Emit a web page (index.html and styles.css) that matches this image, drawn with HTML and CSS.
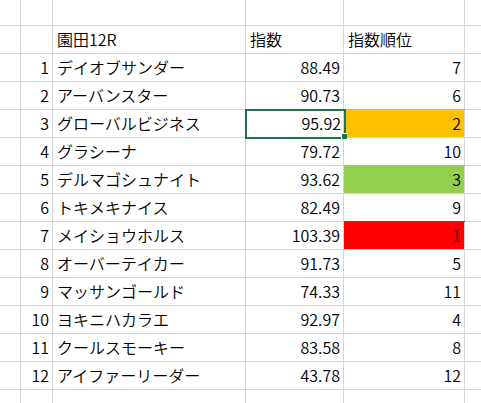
FILE: index.html
```html
<!DOCTYPE html>
<html lang="ja">
<head>
<meta charset="utf-8">
<link rel="stylesheet" href="styles.css">
</head>
<body>
<div class="sheet">
  <div class="c"></div><div class="c"></div><div class="c"></div><div class="c"></div><div class="c"></div><div class="c"></div>

  <div class="c"></div><div class="c"></div><div class="c t">園田12R</div><div class="c t">指数</div><div class="c t">指数順位</div><div class="c"></div>

  <div class="c"></div><div class="c n">1</div><div class="c t">デイオブサンダー</div><div class="c n">88.49</div><div class="c n">7</div><div class="c"></div>
  <div class="c"></div><div class="c n">2</div><div class="c t">アーバンスター</div><div class="c n">90.73</div><div class="c n">6</div><div class="c"></div>
  <div class="c"></div><div class="c n">3</div><div class="c t">グローバルビジネス</div><div class="c n sel">95.92<span class="selbox"></span><span class="handle"></span></div><div class="c n orange">2</div><div class="c"></div>
  <div class="c"></div><div class="c n">4</div><div class="c t">グラシーナ</div><div class="c n">79.72</div><div class="c n">10</div><div class="c"></div>
  <div class="c"></div><div class="c n">5</div><div class="c t">デルマゴシュナイト</div><div class="c n">93.62</div><div class="c n green">3</div><div class="c"></div>
  <div class="c"></div><div class="c n">6</div><div class="c t">トキメキナイス</div><div class="c n">82.49</div><div class="c n">9</div><div class="c"></div>
  <div class="c"></div><div class="c n">7</div><div class="c t">メイショウホルス</div><div class="c n">103.39</div><div class="c n red">1</div><div class="c"></div>
  <div class="c"></div><div class="c n">8</div><div class="c t">オーバーテイカー</div><div class="c n">91.73</div><div class="c n">5</div><div class="c"></div>
  <div class="c"></div><div class="c n">9</div><div class="c t">マッサンゴールド</div><div class="c n">74.33</div><div class="c n">11</div><div class="c"></div>
  <div class="c"></div><div class="c n">10</div><div class="c t">ヨキニハカラエ</div><div class="c n">92.97</div><div class="c n">4</div><div class="c"></div>
  <div class="c"></div><div class="c n">11</div><div class="c t">クールスモーキー</div><div class="c n">83.58</div><div class="c n">8</div><div class="c"></div>
  <div class="c"></div><div class="c n">12</div><div class="c t">アイファーリーダー</div><div class="c n">43.78</div><div class="c n">12</div><div class="c"></div>

  <div class="c"></div><div class="c"></div><div class="c"></div><div class="c"></div><div class="c"></div><div class="c"></div>
</div>
</body>
</html>
```

FILE: styles.css
```css
html, body {
  margin: 0;
  padding: 0;
  background: #ffffff;
  overflow: hidden;
}

.sheet {
  display: grid;
  grid-template-columns: 21px 32px 193px 98px 121px 40px;
  grid-template-rows: 26px repeat(14, 28px);
  font-family: "Noto Sans CJK JP", "Noto Sans", sans-serif;
  font-size: 16px;
  font-weight: 350;
  color: #000000;
}

.c {
  box-sizing: border-box;
  border-right: 1px solid #d4d4d4;
  border-bottom: 1px solid #d4d4d4;
  line-height: 27px;
  white-space: nowrap;
  overflow: visible;
}

.t {
  padding-left: 4px;
  text-align: left;
}

.n {
  padding-right: 3px;
  text-align: right;
}

.sel {
  position: relative;
  padding-right: 2px;
}

.selbox {
  position: absolute;
  left: -1px;
  top: -1px;
  width: 101px;
  height: 30px;
  box-sizing: border-box;
  border: 2px solid #217346;
}

.handle {
  position: absolute;
  left: 95px;
  top: 23px;
  width: 5px;
  height: 5px;
  background: #217346;
  border-left: 1px solid #ffffff;
  border-top: 1px solid #ffffff;
}

.orange {
  background: #ffc000;
  box-shadow: 0 -1px 0 #ffc000;
}

.green {
  background: #92d050;
  box-shadow: 0 -1px 0 #92d050;
}

.red {
  background: #ff0000;
  box-shadow: 0 -1px 0 #ff0000;
}
```
